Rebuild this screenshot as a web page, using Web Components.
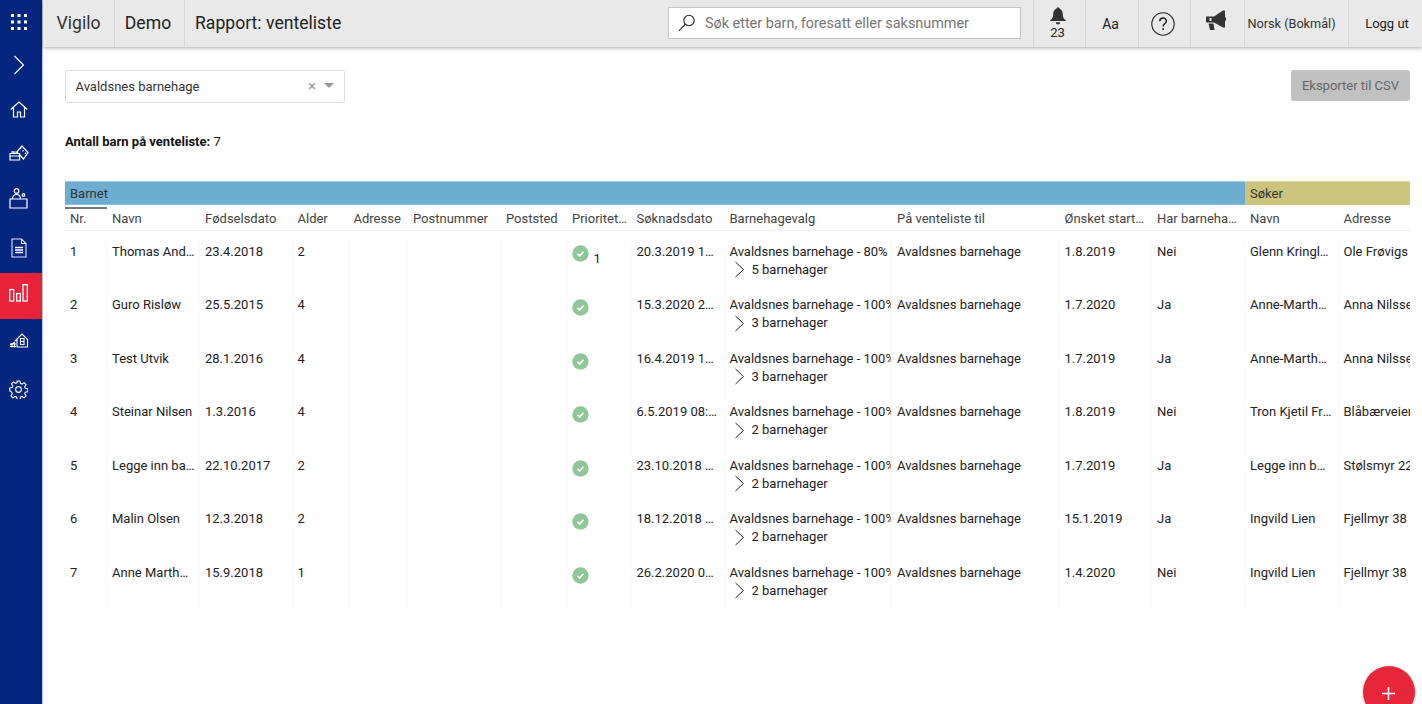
<!DOCTYPE html>
<html lang="no"><head><meta charset="utf-8"><title>Rapport: venteliste</title>
<style>
html,body{margin:0;height:704px;overflow:hidden;background:#fff;font-family:Roboto,"Liberation Sans",sans-serif}
</style></head><body>
<vg-app></vg-app>
<script>
const ICONS={
grid:'<svg width="18" height="18" viewBox="0 0 18 18" fill="#fff"><rect x="1" y="1" width="3" height="3"/><rect x="7.500" y="1" width="3" height="3"/><rect x="14" y="1" width="3" height="3"/><rect x="1" y="7.500" width="3" height="3"/><rect x="7.500" y="7.500" width="3" height="3"/><rect x="14" y="7.500" width="3" height="3"/><rect x="1" y="14" width="3" height="3"/><rect x="7.500" y="14" width="3" height="3"/><rect x="14" y="14" width="3" height="3"/></svg>',
chev:'<svg width="12" height="20" viewBox="0 0 12 20" fill="none" stroke="#fff" stroke-width="1.100"><path d="M1.500 1l9 9-9 9"/></svg>',
home:'<svg width="18" height="17" viewBox="0 0 18 17" fill="none" stroke="#fff" stroke-width="1.200"><path d="M.7 8.500L9 1l8.300 7.500M3.500 6.500V16h4v-5h3v5h4V6.500"/></svg>',
blocks:'<svg width="20" height="16" viewBox="0 0 20 16" fill="none" stroke="#fff" stroke-width="1.200"><path d="M1 8.500h9.500V15H1zM1 11h9.500M3 8.500V6.800h2v1.700M7 8.500V6.800h1.500v1.700M8.500 6L13 1l6 6.500-4.500 6.500-4-4.500M12.200 2.500l-1 1.300M14.500 5l-1 1.300M17 7.500l-1 1.300"/></svg>',
people:'<svg width="19" height="21" viewBox="0 0 19 21" fill="none" stroke="#fff" stroke-width="1.200"><circle cx="7.500" cy="3" r="2.300"/><circle cx="14.500" cy="7" r="1.300"/><path d="M1 11h17v9H1zM3.500 11c0-6 8-6 8 0"/></svg>',
doc:'<svg width="16" height="20" viewBox="0 0 16 20" fill="none" stroke="#dfe6f4" stroke-width="1.100"><path d="M1 1h9.500L15 5.500V19H1zM10.500 1v4.500H15"/><path d="M4 9.500h8M4 12h8M4 14.500h8" stroke="#fff" stroke-width="1.300"/></svg>',
bars:'<svg width="19" height="18" viewBox="0 0 19 18" fill="none" stroke="#fff" stroke-width="1.300"><rect x=".7" y="5.500" width="4" height="11.500"/><rect x="7.700" y="9.500" width="3.600" height="7.500"/><rect x="14" y=".7" width="4.300" height="16.300"/></svg>',
house:'<svg width="20" height="15" viewBox="0 0 20 15" fill="none" stroke="#fff" stroke-width="1.100"><path d="M6 8l7-7 6 6M8 6.500V14h10.500V6M1 12l5-3M1 11h6M1 13.500h6M3 10v4.500M5.500 9.500v5M11.500 5.500h3.500v6h-3.500zM11.500 8.500h3.500"/></svg>',
gear:'<svg width="19" height="19" viewBox="0 0 20 20" fill="none" stroke="#fff" stroke-width="1.150"><circle cx="10" cy="10" r="3"/><path d="M8.500 1h3l.5 2.600 1.700.7 2.200-1.500 2.100 2.100-1.500 2.200.7 1.700 2.600.5v3l-2.600.5-.7 1.700 1.500 2.200-2.100 2.100-2.200-1.500-1.700.7-.5 2.600h-3l-.5-2.600-1.700-.7-2.200 1.500-2.100-2.100 1.500-2.200-.7-1.700L.8 11.500v-3l2.600-.5.7-1.700-1.500-2.200 2.100-2.100 2.200 1.500 1.700-.7z"/></svg>',
search:'<svg width="18" height="18" viewBox="0 0 18 18" fill="none" stroke="#222" stroke-width="1.100"><circle cx="11" cy="6.500" r="5.200"/><path d="M7.300 10.200L1 16.800"/></svg>',
bell:'<svg width="16" height="18" viewBox="0 0 16 18" fill="#333"><circle cx="8" cy="1.700" r="1.500"/><path d="M8 1.500c3.300 0 4.800 2.500 4.800 6 0 3 1.200 4.300 3 5.700v.8H.2v-.8c1.800-1.400 3-2.700 3-5.700 0-3.500 1.500-6 4.800-6z"/><path d="M5.800 15.300h4.400a2.200 2.200 0 0 1-4.400 0z"/></svg>',
help:'<svg width="24" height="24" viewBox="0 0 24 24" fill="none" stroke="#222" stroke-width="1.100"><circle cx="12" cy="12" r="11.200"/><path d="M8.800 9.200c0-4.200 6.600-4.200 6.600-.2 0 2.600-3.300 2.600-3.300 5.400" stroke-width="1.500"/><circle cx="12.100" cy="17" r="1" fill="#222" stroke="none"/></svg>',
horn:'<svg width="21" height="21" viewBox="0 0 21 21" fill="#333"><path d="M0 6.500h8L17 0.500h2v17h-2L8 12.500H0z"/><path d="M19 7c1.500 0 1.500 4 0 4z"/><path d="M2.500 13.500h5l1 6.500H4z"/><rect x="3.500" y="8" width="2" height="3" fill="#e8e8e8"/></svg>',
check:'<svg width="17" height="17" viewBox="0 0 17 17"><circle cx="8.500" cy="8.500" r="8.200" fill="#8fc79a"/><path d="M5.500 8.800l2.200 2 3.800-4" fill="none" stroke="#fff" stroke-width="1.600"/></svg>',
rowchev:'<svg width="12" height="17" viewBox="0 0 12 17" fill="none" stroke="#222" stroke-width="1"><path d="M1.500 1l8 7.500-8 7.500"/></svg>'
};
function def(name,css,html){
  customElements.define(name,class extends HTMLElement{
    constructor(){super();this.attachShadow({mode:'open'}).innerHTML='<style>'+css+'</style>'+(typeof html==='function'?html(this):html);}
  });
}
def('vg-side-item',`:host{display:flex;align-items:center;justify-content:center;width:42px;height:var(--h,46px);box-sizing:border-box;padding-right:5px;padding-bottom:var(--pb,0)}
:host([active]){background:#e8233a}`,'<slot></slot>');
def('vg-sidebar',`:host{display:flex;flex-direction:column;width:43px;flex:none;background:#04267f;border-right:1px solid #b5c4de;box-sizing:border-box;height:704px}`,
 ()=>{
  const it=[['grid',44],['chev',42],['home',47],['blocks',40],['people',50],['doc',50],['bars',46,1,6],['house',43],['gear',54]];
  return it.map(([k,h,a,p])=>`<vg-side-item ${a?'active':''} style="--h:${h}px;--pb:${p||0}px">${ICONS[k]}</vg-side-item>`).join('');
 });
def('vg-top-cell',`:host{display:flex;align-items:center;justify-content:center;height:47px;box-sizing:border-box;border-right:1px solid #d8d8d8;color:#222;flex:none}`,'<slot></slot>');
def('vg-topbar',`:host{display:flex;height:47px;background:#e9e9e9;box-shadow:0 1px 4px rgba(0,0,0,.35);position:relative;z-index:2;flex:none;box-sizing:border-box}
.sp{flex:1}
.search{width:353px;height:32px;margin:7px 12px 0;background:#fff;border:1px solid #c4c4c4;display:flex;align-items:center;box-sizing:border-box;padding-left:9px;gap:9px;font-size:14.400px;color:#757575;flex:none}
.bell{display:flex;flex-direction:column;align-items:center;font-size:13px;line-height:13px;gap:1px;margin-top:-2px}
.v{font-size:17.600px;color:#333;margin-top:-1px}.t{font-size:17.600px;margin-top:-1px}
.s{font-size:13px}
.lang{font-size:12.700px;color:#333}
svg{display:block}`,
`<vg-top-cell style="width:72px"><span class="v">Vigilo</span></vg-top-cell>
<vg-top-cell style="width:70px;padding-right:3px"><span class="t">Demo</span></vg-top-cell>
<vg-top-cell style="padding-left:10px;border:0"><span class="t">Rapport: venteliste</span></vg-top-cell>
<div class="sp"></div>
<div style="display:flex"><div class="search">${ICONS.search}<span>Søk etter barn, foresatt eller saksnummer</span></div></div>
<vg-top-cell style="width:53px;border-left:1px solid #d8d8d8;padding-right:4px"><div class="bell">${ICONS.bell}<span>23</span></div></vg-top-cell>
<vg-top-cell style="width:53px;padding-right:3px"><span style="font-size:14px">Aa</span></vg-top-cell>
<vg-top-cell style="width:52px;padding-right:3px">${ICONS.help}</vg-top-cell>
<vg-top-cell style="width:54px;padding-right:2px;padding-bottom:6px">${ICONS.horn}</vg-top-cell>
<vg-top-cell style="width:104px;padding-right:10px"><span class="lang">Norsk (Bokmål)</span></vg-top-cell>
<vg-top-cell style="width:73px;border:0;padding-left:3px"><span class="s">Logg ut</span></vg-top-cell>`);
def('vg-select',`:host{display:flex;align-items:center;width:280px;height:33px;box-sizing:border-box;border:1px solid #ddd;border-radius:2px;padding:0 10px 0 9.500px;font-size:13px;color:#333;background:#fff}
span{flex:1}i{font-style:normal;color:#999;font-size:15px;margin-right:8px;line-height:14px;margin-top:-2px}
b{width:0;height:0;border:5px solid transparent;border-top:5px solid #999;border-bottom:0;margin-top:-2px}`,
`<span><slot></slot></span><i>×</i><b></b>`);
def('vg-button',`:host{display:flex;align-items:center;justify-content:center;width:119px;height:31px;background:#c1c1c1;color:#666;border-radius:3px;font-size:13px}`,'<slot></slot>');
const W=[42,93,92.500,56,59.500,93,66,64.500,93,167.500,167.500,92.500,93,93.500,72];
const H=['Nr.','Navn','Fødselsdato','Alder','Adresse','Postnummer','Poststed','Prioritetsbarn','Søknadsdato','Barnehagevalg','På venteliste til','Ønsket startdato','Har barnehageplass','Navn','Adresse'];
const R=[
['1','Thomas Andersen','23.4.2018','2','20.3.2019 12:00','80%','5','1.8.2019','Nei','Glenn Kringlebotn','Ole Frøvigs gate 4','1'],
['2','Guro Risløw','25.5.2015','4','15.3.2020 20:11','100%','3','1.7.2020','Ja','Anne-Marthe Lien','Anna Nilssens vei 2'],
['3','Test Utvik','28.1.2016','4','16.4.2019 12:30','100%','3','1.7.2019','Ja','Anne-Marthe Lien','Anna Nilssens vei 2'],
['4','Steinar Nilsen','1.3.2016','4','6.5.2019 08:15','100%','2','1.8.2019','Nei','Tron Kjetil Fredriksen','Blåbærveien 12'],
['5','Legge inn barn test','22.10.2017','2','23.10.2018 10:00','100%','2','1.7.2019','Ja','Legge inn barn test','Stølsmyr 22 B'],
['6','Malin Olsen','12.3.2018','2','18.12.2018 09:40','100%','2','15.1.2019','Ja','Ingvild Lien','Fjellmyr 38 A'],
['7','Anne Marthe Lien','15.9.2018','1','26.2.2020 07:20','100%','2','1.4.2020','Nei','Ingvild Lien','Fjellmyr 38 A']];
def('vg-table',`:host{display:block;width:1345px;overflow:hidden;font-size:13px;color:#222}
.groups{display:grid;grid-template-columns:1180px 165px;height:26px;line-height:23px}
.g{padding-left:5px;box-sizing:border-box;height:24px;color:#333}
.g1{background:#6dadd2;border-top:1px solid #9ccbe2;border-bottom:1px solid #8cbfdc}.g2{background:#cdc47d;border-top:1px solid #ddd59c}
.ind{width:42px;height:2px;background:#777}
.row{display:grid;grid-template-columns:${W.map(x=>x+'px').join(' ')};width:max-content}
.head{height:21px;line-height:19.500px;color:#444;border-bottom:1px solid #eee;box-sizing:content-box}
.head div{padding-left:5px;box-sizing:border-box;overflow:hidden;white-space:nowrap;text-overflow:ellipsis;padding-right:2px}
.body{padding-top:5px}
.r{height:53.500px;line-height:18px}
.r>div{padding:6.500px 4px 0 5px;box-sizing:border-box;border-right:1px solid #fafafa;overflow:hidden;white-space:nowrap;text-overflow:ellipsis;height:100%}
.r>div:nth-child(14){padding-right:5.500px}
.r>div.clip{text-overflow:clip;padding-right:0}
.r>div.c{display:flex;gap:5px;padding:6px 0 0 4.500px}
.c svg{margin-top:3px;flex:none}.c span{margin-top:7.500px}
.c.noc svg{margin-top:3.500px}
.sub{display:flex;align-items:center;gap:6px;padding-left:4px;margin-top:.5px;height:17px}
.sub svg{display:block;flex:none}`,
()=>`<div class="groups"><div class="g g1">Barnet</div><div class="g g2">Søker</div></div><div class="ind"></div>
<div class="row head">${H.map(h=>`<div>${h}</div>`).join('')}</div>
<div class="body">${R.map(r=>`<div class="row r">
<div>${r[0]}</div><div>${r[1]}</div><div>${r[2]}</div><div>${r[3]}</div><div></div><div></div><div></div>
<div class="c ${r[11]?'':'noc'}">${ICONS.check}${r[11]?`<span>${r[11]}</span>`:''}</div>
<div>${r[4]}</div>
<div class="clip">Avaldsnes barnehage - ${r[5]}<div class="sub">${ICONS.rowchev}<span>${r[6]} barnehager</span></div></div>
<div>Avaldsnes barnehage</div><div>${r[7]}</div><div>${r[8]}</div><div>${r[9]}</div><div class="clip">${r[10]}</div></div>`).join('')}</div>`);
def('vg-fab',`:host{position:absolute;left:1363px;top:666px;width:52px;height:52px;border-radius:50%;background:#e8263a;box-shadow:0 1px 3px rgba(0,0,0,.3);display:block}
svg{position:absolute;left:19px;top:21px}`,
`<svg width="13" height="13" viewBox="0 0 13 13" stroke="#fff" stroke-width="1.600"><path d="M6.500 0v13M0 6.500h13"/></svg>`);
def('vg-app',`:host{display:flex;width:1422px;height:704px;position:relative;overflow:hidden}
.main{flex:1;display:flex;flex-direction:column;min-width:0}
.content{padding:23px 12px 0 22px;flex:1}
.top{display:flex;justify-content:space-between;align-items:flex-start}
.count{margin-top:30px;font-size:13px;color:#111;line-height:18px;height:48px}
b{font-weight:700}`,
`<vg-sidebar></vg-sidebar>
<div class="main"><vg-topbar></vg-topbar>
<div class="content"><div class="top"><vg-select>Avaldsnes barnehage</vg-select><vg-button>Eksporter til CSV</vg-button></div>
<div class="count"><b>Antall barn på venteliste:</b> 7</div>
<vg-table></vg-table></div></div><vg-fab></vg-fab>`);
</script>
</body></html>
